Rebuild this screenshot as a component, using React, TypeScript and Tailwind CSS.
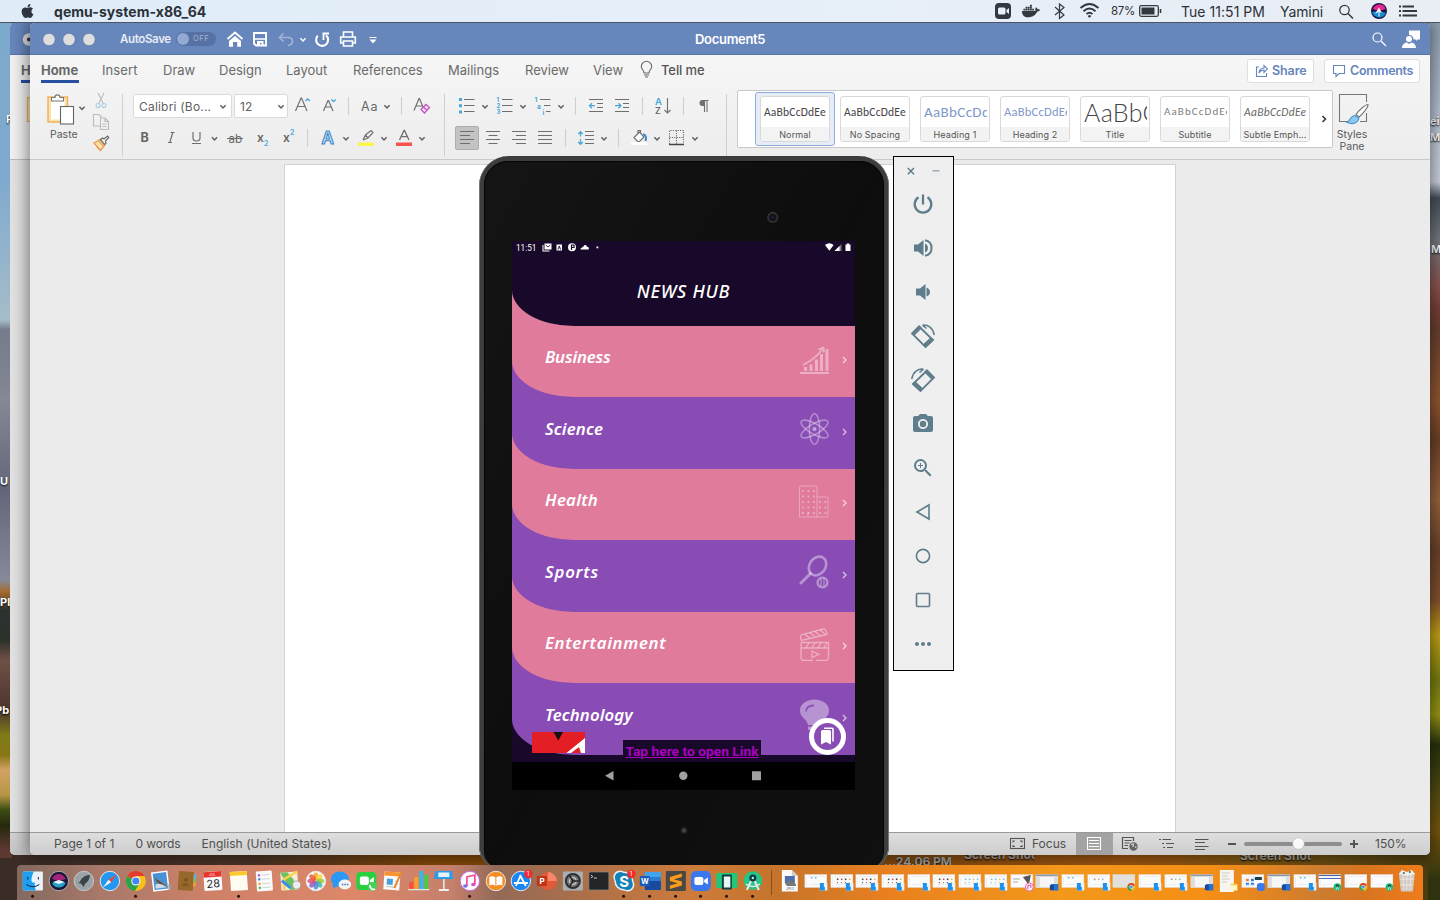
import React from "react";
import type { ReactNode } from "react";
import { FaApple, FaDocker } from "react-icons/fa";
import { MdCameraAlt, MdZoomIn, MdMoreHoriz } from "react-icons/md";

type BoxProps = { x: number; y: number; w: number; h: number; children?: ReactNode };

/* Icon cell: the viewBox starts at (x, y), so neighbouring cells share one coordinate space. */
function Ic({ x, y, w, h, children }: BoxProps) {
  return (
    <svg className="block shrink-0" width={w} height={h} viewBox={`${x} ${y} ${w} ${h}`} fill="none" stroke="#6f6f6f" strokeWidth="1.1">
      {children}
    </svg>
  );
}

const Chev = ({ x, y, c = "#5f5f5f" }: { x: number; y: number; c?: string }) => (
  <path d={`M${x - 2.6} ${y - 1.2}L${x} ${y + 1.5}L${x + 2.6} ${y - 1.2}`} stroke={c} strokeWidth="1.5" />
);

/* ---------- Menu bar ---------- */
function MenuBar() {
  return (
    <header className="flex h-[23px] items-center border-b border-[#4a5563] bg-linear-to-r from-[#dfecf8] via-[#e6eff9] to-[#e9edf4] text-[#2a3138]">
      <FaApple className="mb-px ml-[20px] h-[16px] w-[15px] text-[#2d3640]" />
      <span className="ml-[19px] w-[941px] text-[14px] font-bold tracking-[0.050px]">qemu-system-x86_64</span>
      <Ic x={995} y={0} w={24} h={22}>
        <rect x="995" y="3" width="16" height="16" rx="4" fill="#33393f" stroke="none" />
        <rect x="998" y="7.500" width="7.500" height="7" rx="1.500" fill="#e9f0f8" stroke="none" />
        <path d="M1006.500 10L1009 8V14L1006.500 12Z" fill="#e9f0f8" stroke="none" />
      </Ic>
      <FaDocker className="ml-[3px] h-[18px] w-[18px] text-[#33393f]" />
      <Ic x={1040} y={0} w={85} h={22}>
        <path d="M1055 7L1064 15L1059.500 18.500V4L1064 7.500L1055 15" stroke="#33393f" strokeWidth="1.200" />
        <path d="M1080.500 8Q1089.500 0 1098.500 8" stroke="#33393f" strokeWidth="2" />
        <path d="M1083.500 11.200Q1089.500 5.800 1095.500 11.200" stroke="#33393f" strokeWidth="2" />
        <path d="M1086.500 14Q1089.500 11.500 1092.500 14" stroke="#33393f" strokeWidth="2" />
        <circle cx="1089.500" cy="16.300" r="1.300" fill="#33393f" stroke="none" />
      </Ic>
      <span className="mt-[2px] -ml-[14px] w-[28px] text-[11.500px] tracking-[-0.300px]">87%</span>
      <Ic x={1139} y={0} w={42} h={22}>
        <rect x="1139.700" y="5.700" width="18.600" height="10.600" rx="1.500" stroke="#33393f" strokeWidth="1.300" />
        <rect x="1141.500" y="7.500" width="13" height="7" fill="#33393f" stroke="none" />
        <path d="M1160.500 9V13" stroke="#33393f" strokeWidth="1.600" />
      </Ic>
      <span className="w-[99px] text-[14px] tracking-[0.040px] whitespace-nowrap">Tue 11:51 PM</span>
      <span className="w-[58px] text-[14px] tracking-[-0.100px]">Yamini</span>
      <Ic x={1338} y={0} w={32} h={22}>
        <circle cx="1344.500" cy="10" r="4.700" stroke="#33393f" strokeWidth="1.300" />
        <path d="M1348 13.500L1353 18.500" stroke="#33393f" strokeWidth="1.500" />
      </Ic>
      <Ic x={1370} y={0} w={60} h={22}>
        <circle cx="1379" cy="11" r="8" fill="#1c1648" stroke="none" />
        <path d="M1373 9C1374 4 1384 2 1385.500 9L1379 11Z" fill="#ec268f" stroke="none" />
        <path d="M1372 12C1374 18 1382 20 1386 13L1379 11Z" fill="#188cd3" stroke="none" />
        <path d="M1379 7.500L1382 13L1379.500 12V16.500H1378.500V12L1375 14Z" fill="#e9f4ff" stroke="none" />
        <path d="M1402.500 6.500H1414M1402.500 11H1417M1402.500 15.500H1417" stroke="#33393f" strokeWidth="2" />
        <path d="M1399 6.500H1401M1399 11H1401M1399 15.500H1401" stroke="#33393f" strokeWidth="1.800" />
      </Ic>
    </header>
  );
}

/* ---------- Word window ---------- */
function TitleBar() {
  return (
    <div className="flex h-[32px] shrink-0 items-center border-b border-[#5575ab] bg-[#6786bb] text-white">
      <Ic x={30} y={23} w={90} h={32}>
        {[49, 69, 89].map((c) => (
          <circle key={c} cx={c} cy="39.500" r="6.200" fill="#dedede" stroke="#4f6c9f" strokeWidth="0.600" />
        ))}
      </Ic>
      <span className="mt-[3px] w-[56px] text-[11.500px] font-semibold tracking-[-0.350px] text-[#e6ecf6]">AutoSave</span>
      <div className="mt-px flex h-[14px] w-[40px] items-center rounded-full bg-[#5672a4]">
        <span className="ml-[1px] size-[12px] rounded-full bg-[#92a9d1]" />
        <span className="ml-[4px] text-[7.500px] tracking-[0.600px] text-[#a3b5d6]">OFF</span>
      </div>
      <Ic x={216} y={23} w={34} h={32}>
        <path d="M227.500 39L235 32.500L242.500 39" stroke="#fff" strokeWidth="1.900" />
        <path d="M229 41L235 36L241 41V46.800H237.200V42H233V46.800H229Z" fill="#fff" stroke="none" />
      </Ic>
      <Ic x={250} y={23} w={24} h={32}>
        <path d="M254 33H266V45.500H256L254 43.500Z" stroke="#fff" strokeWidth="1.900" />
        <path d="M254 39H266" stroke="#fff" strokeWidth="1.400" />
        <path d="M257 41H263.500V46H261.500V43H260V46H257Z" fill="#fff" stroke="none" />
      </Ic>
      <Ic x={274} y={23} w={34} h={32}>
        <path d="M283.500 33.500L279.500 37.500L283.500 41.500M279.500 37.500H288C294 37.500 294 45 288 45.500" stroke="#a1b3d5" strokeWidth="1.700" />
        <Chev x={303} y={39.500} c="#fff" />
      </Ic>
      <Ic x={308} y={23} w={28} h={32}>
        <path d="M326 35.300A6 6 0 1 1 317.700 35.800" stroke="#fff" strokeWidth="2.100" />
        <path d="M322.500 33.500H329M323.500 33.500V40" stroke="#fff" strokeWidth="1.800" />
      </Ic>
      <Ic x={336} y={23} w={28} h={32}>
        <path d="M343.500 37V32H352.500V37M343 43H340.700V37H355.300V43H353M343.500 41H352.500V46H343.500Z" stroke="#fff" strokeWidth="1.600" />
      </Ic>
      <Ic x={364} y={23} w={40} h={32}>
        <path d="M369.500 37.500H376.500" stroke="#fff" />
        <path d="M369.500 39.500H376.500L373 43.500Z" fill="#fff" stroke="none" />
      </Ic>
      <span className="mt-[3px] ml-[291px] w-[670px] text-[13px] font-semibold tracking-[-0.300px]">Document5</span>
      <Ic x={1365} y={23} w={30} h={32}>
        <circle cx="1377.500" cy="37.500" r="4.500" stroke="#fff" strokeWidth="1.200" />
        <path d="M1381 41L1386 46" stroke="#fff" strokeWidth="1.200" />
      </Ic>
      <Ic x={1395} y={23} w={35} h={32}>
        <path d="M1409 30.500H1420V39.500H1417.500L1416 41V39.500H1413.500A4.200 4.200 0 0 0 1409 35Z" fill="#fff" stroke="none" />
        <circle cx="1409" cy="39" r="3" fill="#fff" stroke="none" />
        <path d="M1402 48C1402 44.500 1405 42.500 1407 42.500L1409 44L1411.500 42.500C1414 43 1416 44.500 1416 48Z" fill="#fff" stroke="none" />
      </Ic>
    </div>
  );
}

function Tabs() {
  return (
    <div className="flex h-[32px] shrink-0 items-center pl-[11px] text-[13px] whitespace-nowrap text-[#6a6a6a]">
      <span className="w-[61px] shrink-0 font-bold">
        <span className="block h-[24px] w-[38px] border-b-[3px] border-[#274f9f] leading-[22px] tracking-[-0.050px]">Home</span>
      </span>
      <span className="w-[61px] shrink-0 tracking-[0.100px]">Insert</span>
      <span className="w-[56px] shrink-0">Draw</span>
      <span className="w-[67px] shrink-0">Design</span>
      <span className="w-[67px] shrink-0">Layout</span>
      <span className="w-[95px] shrink-0">References</span>
      <span className="w-[77px] shrink-0">Mailings</span>
      <span className="w-[68px] shrink-0">Review</span>
      <span className="w-[45px] shrink-0">View</span>
      <Ic x={638} y={55} w={23} h={32}>
        <path d="M644 73C644 70 641.300 69.500 641.300 66.500A5.200 5.200 0 0 1 651.700 66.500C651.700 69.500 649 70 649 73ZM644 75H649M645 77H648" stroke="#666" />
      </Ic>
      <span className="w-[586px] shrink-0 font-medium tracking-[-0.100px] text-[#555]">Tell me</span>
      <button className="flex h-[24px] w-[67px] shrink-0 items-center rounded-[3px] border border-[#dedede] bg-white font-semibold text-[#6585bd]">
        <Ic x={1248} y={60} w={24} h={22}>
          <path d="M1259 67H1256.500V76.500H1266.500V73M1259 73C1259 69.500 1262 68 1264 68V65.500L1267.500 69L1264 72.500V70C1262 70 1260 71 1259 73Z" stroke="#6585bd" />
        </Ic>
        <span className="text-[12.500px] tracking-[-0.100px]">Share</span>
      </button>
      <button className="ml-[10px] flex h-[24px] w-[96px] shrink-0 items-center rounded-[3px] border border-[#dedede] bg-white font-semibold text-[#6585bd]">
        <Ic x={1325} y={60} w={25} h={22}>
          <path d="M1333.500 65.500H1344.500V73.500H1339L1336 76.500V73.500H1333.500Z" stroke="#6585bd" />
        </Ic>
        <span className="text-[12.500px] tracking-[-0.300px]">Comments</span>
      </button>
    </div>
  );
}

const Sep = () => <div className="h-[62px] w-px shrink-0 self-center bg-[#cfcfcf]" />;

function PasteGroup() {
  return (
    <div className="flex w-[92px] shrink-0">
      <div className="w-[62px]">
        <Ic x={30} y={90} w={62} h={37}>
          <rect x="48" y="97" width="19.500" height="25" fill="#fbe3ae" stroke="#f1ae58" strokeWidth="1.400" />
          <rect x="51" y="99.500" width="13.500" height="20" fill="#fff" stroke="none" />
          <path d="M51.500 101V97.500H55C55 94 60 94 60 97.500H63.500V101Z" fill="#fff" stroke="#777" />
          <rect x="60.500" y="106.500" width="13" height="17.500" fill="#fff" stroke="#666" />
          <Chev x={82} y={108} />
        </Ic>
        <div className="pl-[20px] text-[10.500px] leading-[15px] text-[#5a5a5a]">Paste</div>
      </div>
      <Ic x={92} y={90} w={29} h={64}>
        <path d="M98 93L103.500 104M104 93L98.500 104" stroke="#bbb" />
        <circle cx="98" cy="105.500" r="2" stroke="#a8cfe6" />
        <circle cx="104" cy="105.500" r="2" stroke="#a8cfe6" />
        <path d="M100 126H93.500V114.500H99L102 117.500M100.500 118H105L108.500 121.500V129.500H100.500ZM105 118V121.500H108.500M102.500 124H106.500M102.500 126.500H106.500" stroke="#bcbcbc" />
        <path d="M94 143L100 139.500L104.500 145.500L100.500 150.500Z" fill="#fbe3ae" stroke="#e9994c" strokeWidth="1.300" />
        <path d="M97 147L100 150M98.500 141L103.500 146.500" stroke="#e9994c" />
        <path d="M100.500 139.500L102.500 138L104 139L107.500 136L108.800 137.500L105.500 141L106 143L104.800 144.500Z" fill="#f4f4f4" stroke="#666" />
      </Ic>
    </div>
  );
}

function FontGroup() {
  return (
    <div className="w-[321px] shrink-0 pl-[10px]">
      <div className="flex h-[32px] items-center">
        <div className="flex h-[24px] w-[99px] items-center rounded-[2px] border border-[#dadada] bg-white">
          <span className="mt-px w-[83px] pl-[5px] text-[12px] tracking-[0.200px] text-[#606060]">Calibri (Bo...</span>
          <Ic x={218} y={95} w={12} h={22}><Chev x={224} y={106.500} /></Ic>
        </div>
        <div className="ml-[2px] flex h-[24px] w-[54px] items-center rounded-[2px] border border-[#dadada] bg-white">
          <span className="mt-px w-[40px] pl-[5px] text-[12px] text-[#606060]">12</span>
          <Ic x={274} y={95} w={12} h={22}><Chev x={280} y={106.500} /></Ic>
        </div>
        <Ic x={288} y={90} w={30} h={32}>
          <path d="M295.500 111L301 98H301.500L307 111M297.500 106.500H305" strokeWidth="1.200" />
          <path d="M305.500 101L307.700 99L310 101" stroke="#4aa7dc" strokeWidth="1.400" />
        </Ic>
        <Ic x={318} y={90} w={24} h={32}>
          <path d="M323.500 111L328 100.500H328.500L333 111M325 107H331.500" strokeWidth="1.200" />
          <path d="M331.300 99.500L333.500 101.500L335.800 99.500" stroke="#4aa7dc" strokeWidth="1.400" />
        </Ic>
        <Ic x={342} y={90} w={68} h={32}>
          <path d="M348.500 97V115M401.500 97V115" stroke="#cfcfcf" />
          <text x="361" y="110.500" fontSize="12.500" letterSpacing="1" fill="#666" stroke="none">Aa</text>
          <Chev x={387} y={106.500} />
        </Ic>
        <Ic x={410} y={90} w={24} h={32}>
          <path d="M414 110.500L419 98.500H419.500L423 107M416 106H422" strokeWidth="1.200" />
          <path d="M421 109.500L426 104.500L429.500 107.500L424.500 113ZM423.500 107L427 110.500" fill="#f7e3f7" stroke="#c055c0" strokeWidth="1.300" />
        </Ic>
      </div>
      <div className="flex h-[32px] items-center">
        <Ic x={133} y={122} w={24} h={32}><text x="140.500" y="142" fontSize="12.500" fontWeight="700" fill="#666" stroke="none">B</text></Ic>
        <Ic x={157} y={122} w={26} h={32}><path d="M170.500 132.500H174.500M168 142.500H172M172.800 132.500L169.800 142.500" strokeWidth="1.200" /></Ic>
        <Ic x={183} y={122} w={40} h={32}>
          <path d="M193 132V138C193 142 200 142 200 138V132M192 143.500H201" strokeWidth="1.200" />
          <Chev x={214.500} y={138.500} />
        </Ic>
        <Ic x={223} y={122} w={26} h={32}><text x="228.500" y="142.500" fontSize="11.500" fill="#666" stroke="none">ab</text><path d="M227 138.500H243" /></Ic>
        <Ic x={249} y={122} w={26} h={32}>
          <text x="257" y="142" fontSize="12" fontWeight="600" fill="#666" stroke="none">x</text>
          <text x="264" y="146" fontSize="7" fontWeight="600" fill="#4aa7dc" stroke="none">2</text>
        </Ic>
        <Ic x={275} y={122} w={41} h={32}>
          <text x="283" y="142" fontSize="12" fontWeight="600" fill="#666" stroke="none">x</text>
          <text x="290" y="135" fontSize="7" fontWeight="600" fill="#4aa7dc" stroke="none">2</text>
          <path d="M307.500 129V147" stroke="#cfcfcf" />
        </Ic>
        <Ic x={316} y={122} w={38} h={32}>
          <text x="321.500" y="144" fontSize="17" fontWeight="600" fill="#d9edfb" stroke="#3b87c8" strokeWidth="1.100">A</text>
          <Chev x={346} y={138.500} />
        </Ic>
        <Ic x={354} y={122} w={38} h={32}>
          <path d="M363 140L365.500 135L371 130.500L373 132.500L368 138L363 140M365.500 135L368 138" strokeWidth="1.200" />
          <rect x="358" y="142.500" width="16" height="3.500" fill="#fdf44c" stroke="none" />
          <Chev x={384} y={138.500} />
        </Ic>
        <Ic x={392} y={122} w={38} h={32}>
          <path d="M399.500 140L404 130.500H404.500L409 140M401.500 136.700H407" strokeWidth="1.300" />
          <rect x="396" y="142.500" width="16" height="3.500" fill="#fb5252" stroke="none" />
          <Chev x={422} y={138.500} />
        </Ic>
      </div>
    </div>
  );
}

function ParagraphGroup() {
  return (
    <div className="w-[281px] shrink-0">
      <div className="flex h-[32px] items-center">
        <Ic x={445} y={90} w={48} h={32}>
          <path d="M464 99.500H474.500M464 105.500H474.500M464 111.500H474.500" />
          <path d="M460.500 98V101M460.500 104.200V107.200M460.500 110.500V113.500" stroke="#4aa7dc" strokeWidth="3" />
          <Chev x={485} y={106.500} />
        </Ic>
        <Ic x={493} y={90} w={38} h={32}>
          <path d="M502 99.500H512.500M502 105.500H512.500M502 111.500H512.500" />
          <g fill="#4aa7dc" stroke="none" fontSize="6" fontWeight="700">
            <text x="496.500" y="102">1</text><text x="496.500" y="108">2</text><text x="496.500" y="114">3</text>
          </g>
          <Chev x={523} y={106.500} />
        </Ic>
        <Ic x={531} y={90} w={50} h={32}>
          <path d="M540 99.500H550.500M544 105.500H550.500M546 111.500H550.500" />
          <g fill="#4aa7dc" stroke="none" fontSize="6.500" fontWeight="700">
            <text x="534.500" y="102">1</text><text x="537" y="108.500">a</text><text x="542.500" y="114.500">i</text>
          </g>
          <Chev x={561} y={106.500} />
          <path d="M575.500 97V115" stroke="#cfcfcf" />
        </Ic>
        <Ic x={581} y={90} w={26} h={32}>
          <path d="M589 99.500H603M597 103.500H603M597 107.500H603M589 111.500H603" />
          <path d="M595 105.700H590M592 103.200L589.500 105.700L592 108.200" stroke="#4aa7dc" strokeWidth="1.300" />
        </Ic>
        <Ic x={607} y={90} w={42} h={32}>
          <path d="M615 99.500H629M623 103.500H629M623 107.500H629M615 111.500H629" />
          <path d="M615 105.700H620.500M618.500 103.200L621 105.700L618.500 108.200" stroke="#4aa7dc" strokeWidth="1.300" />
          <path d="M642.500 97V115" stroke="#cfcfcf" />
        </Ic>
        <Ic x={649} y={90} w={40} h={32}>
          <text x="655" y="105" fontSize="9.500" fontWeight="600" fill="#4aa7dc" stroke="none">A</text>
          <text x="655" y="114" fontSize="9" fontWeight="500" fill="#666" stroke="none">Z</text>
          <path d="M667.500 98V113M664.500 110L667.500 113L670.500 110" />
          <path d="M683.500 97V115" stroke="#cfcfcf" />
        </Ic>
        <Ic x={689} y={90} w={30} h={32}>
          <path d="M704.500 112V100.500H708.500M707 100.500V112" strokeWidth="1.100" />
          <path d="M704.500 100H702.500A3 3 0 0 0 702.500 106H704.500Z" fill="#6f6f6f" stroke="none" />
        </Ic>
      </div>
      <div className="flex h-[32px] items-center pl-[10px]">
        <div className="h-[24px] w-[24px] rounded-[2px] border border-[#adadad] bg-[#c3c3c3]">
          <Ic x={456} y={127} w={22} h={22}><path d="M460 131.500H474M460 135.500H470M460 139.500H474M460 143.500H470" /></Ic>
        </div>
        <Ic x={479} y={122} w={27} h={32}><path d="M486 131.500H500M488.500 135.500H497.500M486 139.500H500M488.500 143.500H497.500" /></Ic>
        <Ic x={506} y={122} w={26} h={32}><path d="M512 131.500H526M516 135.500H526M512 139.500H526M516 143.500H526" /></Ic>
        <Ic x={532} y={122} w={40} h={32}><path d="M538 131.500H552M538 135.500H552M538 139.500H552M538 143.500H552" /><path d="M565.500 129V147" stroke="#cfcfcf" /></Ic>
        <Ic x={572} y={122} w={54} h={32}>
          <path d="M585 131.500H594M585 135.500H594M585 139.500H594M585 143.500H594" />
          <path d="M580.500 132V136.500M578.200 134L580.500 131.700L582.800 134M580.500 139V144M578.200 142L580.500 144.300L582.800 142" stroke="#4aa7dc" strokeWidth="1.300" />
          <Chev x={604} y={138.500} />
          <path d="M618.500 129V147" stroke="#cfcfcf" />
        </Ic>
        <Ic x={626} y={122} w={38} h={32}>
          <path d="M634 137.500L639.500 132L644 137L638.500 142.500ZM638 133.500V130.500H640.500V133" fill="#fff" strokeWidth="1.200" />
          <path d="M643 134.500C646 134 646.500 138 645.500 141" stroke="#3b87c8" strokeWidth="2" />
          <path d="M631 143.500H647" stroke="#fff" strokeWidth="3" />
          <Chev x={657} y={138.500} />
        </Ic>
        <Ic x={664} y={122} w={40} h={32}>
          <path d="M669.500 144V130.500H683.500V144M676.500 130.500V144M669.500 137.500H683.500" strokeDasharray="1.200 1.200" />
          <path d="M669 144.500H684" stroke="#444" strokeWidth="1.400" />
          <Chev x={695} y={138.500} />
        </Ic>
      </div>
    </div>
  );
}

const styleCards = [
  { n: "Normal", c: "text-[11.500px] text-[#444] tracking-[0.220px]", sel: true },
  { n: "No Spacing", c: "text-[11.500px] text-[#444] tracking-[0.220px]" },
  { n: "Heading 1", c: "text-[15px] text-[#7f99c9] tracking-[0.350px]" },
  { n: "Heading 2", c: "text-[12.500px] text-[#7f99c9] tracking-[0.250px]" },
  { n: "Title", c: "[font-family:Lato,sans-serif]! text-[25px] text-[#444] font-light tracking-[0.300px]" },
  { n: "Subtitle", c: "text-[11px] text-[#808080] tracking-[1.100px]" },
  { n: "Subtle Emph...", c: "text-[11.500px] text-[#666] italic tracking-[0.300px]" },
];

function StylesGroup() {
  return (
    <div className="flex min-w-0 flex-1 pl-[10px]">
      <div className="flex h-[58px] w-[596px] shrink-0 items-center rounded-[2px] border border-[#c9c9c9] bg-white pl-[17px]">
        {styleCards.map((s) => (
          <div key={s.n} className={s.sel ? "flex h-[54px] w-[80px] items-center justify-center rounded-[3px] border border-[#8fabd9] bg-[#e7edf7]" : "flex h-[54px] w-[80px] items-center justify-center"}>
            <div className="flex h-[46px] w-[70px] flex-col overflow-hidden rounded-[3px] border border-[#d9d9d9] bg-white">
              <div className="mr-[2px] ml-[2px] flex h-[31px] items-center overflow-hidden pt-px pl-px">
                <span className={"[font-family:Carlito,Lato,sans-serif] whitespace-nowrap " + s.c}>AaBbCcDdEe</span>
              </div>
              <div className="h-[14px] bg-[#f3f3f3] text-center text-[9px] leading-[15px] tracking-[0.120px] whitespace-nowrap text-[#555]">{s.n}</div>
            </div>
          </div>
        ))}
        <Ic x={1315} y={105} w={17} h={28}><path d="M1322.500 116L1325.500 119L1322.500 122" stroke="#333" strokeWidth="1.500" /></Ic>
      </div>
      <div className="w-[38px]">
        <Ic x={1333} y={90} w={38} h={38}>
          <path d="M1349 121.500H1339.500V94.500H1366.500V102M1366.500 113V121.500H1360" stroke="#777" />
          <path d="M1368 104.500C1366 104 1358 111 1356 114.500L1359 117C1362 115 1368.500 107 1368 104.500Z" fill="#fff" stroke="#777" />
          <path d="M1347 122.500C1350 121 1350 116 1355 115.500L1359 118C1358 123 1353 125 1347 122.500Z" fill="#8ec8f0" stroke="#4a94cc" />
        </Ic>
        <div className="pt-px text-center text-[10.500px] leading-[12px] text-[#5a5a5a]">Styles Pane</div>
      </div>
    </div>
  );
}

function StatusBar() {
  return (
    <footer className="flex h-[23px] shrink-0 items-center border-t border-[#9a9a9a] bg-linear-to-b from-[#dedede] to-[#cdcdcd] pl-[24px] text-[12px] whitespace-nowrap text-[#4f4f4f]">
      <span className="w-[81.500px]">Page 1 of 1</span>
      <span className="w-[66px] tracking-[-0.100px]">0 words</span>
      <span className="w-[798.500px] tracking-[0.050px]">English (United States)</span>
      <Ic x={1000} y={833} w={32} h={22}>
        <rect x="1010.500" y="838.500" width="14" height="10" stroke="#555" />
        <path d="M1013 842.500V841H1015M1020 841H1022V842.500M1022 845V846.500H1020M1015 846.500H1013V845" stroke="#555" />
      </Ic>
      <span className="w-[44px]">Focus</span>
      <div className="bg-[#a3a3a3]">
        <Ic x={1076} y={833} w={37} h={22}>
          <path d="M1087.500 837.500H1100.500V849.500H1087.500ZM1089 840.500H1099M1089 843.500H1099M1089 846.500H1099" stroke="#fff" />
        </Ic>
      </div>
      <Ic x={1113} y={833} w={36} h={22}>
        <path d="M1128 848.500H1122.500V837.500H1133.500V841M1124.500 840.500H1131.500M1124.500 843H1129.500M1124.500 845.500H1128" stroke="#555" strokeWidth="1.200" />
        <circle cx="1133.500" cy="846.500" r="4.200" fill="#666" stroke="none" />
        <path d="M1131 844.500L1133.500 844L1133 847M1135 847.500L1136.500 846.500" stroke="#ddd" />
      </Ic>
      <Ic x={1149} y={833} w={40} h={22}>
        <path d="M1159 839.500H1161M1162.500 839.500H1171M1162 843.500H1164M1166 843.500H1174M1163 847.500H1165M1167 847.500H1173" stroke="#555" />
      </Ic>
      <Ic x={1189} y={833} w={30} h={22}><path d="M1195 839.500H1208.500M1195 842.500H1205M1195 846.500H1208.500M1195 849.500H1205" stroke="#555" /></Ic>
      <Ic x={1219} y={833} w={156} h={22}>
        <path d="M1228 844H1236M1350 844H1358M1354 840V848" stroke="#555" strokeWidth="2" />
        <path d="M1246 844H1340" stroke="#8e8e8e" strokeWidth="4" strokeLinecap="round" />
        <circle cx="1298.500" cy="843.500" r="5.800" fill="#fafafa" stroke="#b8b8b8" strokeWidth="0.600" />
      </Ic>
      <span>150%</span>
    </footer>
  );
}

function WordWindow() {
  return (
    <section className="absolute top-[23px] left-[30px] flex h-[832px] w-[1400px] flex-col overflow-hidden rounded-[5px] bg-[#ebebeb] shadow-[0_0_16px_3px_rgba(0,0,0,0.45)]">
      <TitleBar />
      <div className="flex h-[105px] shrink-0 flex-col border-b border-[#cacaca] bg-linear-to-b from-[#f6f6f6] to-[#ededed]">
        <Tabs />
        <div className="flex flex-1 pt-[3px]">
          <PasteGroup />
          <Sep />
          <FontGroup />
          <Sep />
          <ParagraphGroup />
          <Sep />
          <StylesGroup />
        </div>
      </div>
      <div className="flex min-h-0 flex-1 pt-[4px] pl-[254px]">
        <div className="w-[892px] border border-b-0 border-[#d2d2d2] bg-white" />
      </div>
      <StatusBar />
    </section>
  );
}

function BackWindow() {
  return (
    <section className="absolute top-[23px] left-[10px] flex h-[832px] w-[1400px] flex-col overflow-hidden rounded-[5px] bg-[#e2e2e2]">
      <div className="h-[32px] shrink-0 border-b border-[#5575ab] bg-[#6786bb]">
        <Ic x={10} y={23} w={30} h={32}>
          <circle cx="29" cy="39.500" r="6.200" fill="#dedede" stroke="none" />
          <circle cx="29" cy="39.500" r="2" fill="#333" stroke="none" />
        </Ic>
      </div>
      <div className="h-[105px] shrink-0 border-b border-[#bbb] bg-[#f0f0f0] pt-[4px] pl-[11px] text-[13px] font-bold text-[#6a6a6a]">
        <span className="block h-[24px] w-[38px] border-b-[3px] border-[#274f9f] leading-[22px]">H</span>
        <div className="mt-[14px] ml-[6px] h-[25px] w-[20px] border-[1.500px] border-[#f1ae58] bg-[#fbe3ae]" />
      </div>
      <div className="flex-1" />
      <div className="h-[23px] border-t border-[#9a9a9a] bg-linear-to-b from-[#d2d2d2] to-[#c4c4c4]" />
    </section>
  );
}

/* ---------- Phone ---------- */
const icon = { stroke: "#fff", fill: "none", strokeOpacity: 0.4 };
const categories: { name: string; bg: string; next: string; track: string; art: ReactNode }[] = [
  {
    name: "Business", bg: "bg-[#e07b9c]", next: "bg-[#894cb4]", track: "tracking-[-0.180px]",
    art: (
      <g {...icon} transform="translate(0 1)">
        <path d="M1 29.500H30" strokeWidth="2" />
        <path d="M6.500 27.500V23.500M12 27.500V21M17.500 27.500V16M22.500 27.500V10.500M28 27.500V5.500" strokeWidth="3" />
        <path d="M4 21.500C13 17 19 12 24 5M19 6L24.500 4L25 9" strokeWidth="1.800" />
      </g>
    ),
  },
  {
    name: "Science", bg: "bg-[#894cb4]", next: "bg-[#e07b9c]", track: "tracking-[0.100px]",
    art: (
      <g {...icon} strokeOpacity="0.350" strokeWidth="1.600">
        <ellipse cx="15.500" cy="15.500" rx="5.200" ry="15.300" />
        <ellipse cx="15.500" cy="15.500" rx="5.200" ry="15.300" transform="rotate(60 15.500 15.500)" />
        <ellipse cx="15.500" cy="15.500" rx="5.200" ry="15.300" transform="rotate(120 15.500 15.500)" />
        <circle cx="15.500" cy="15.500" r="1.500" fill="#fff" fillOpacity="0.350" />
      </g>
    ),
  },
  {
    name: "Health", bg: "bg-[#e07b9c]", next: "bg-[#894cb4]", track: "tracking-[0.250px]",
    art: (
      <g {...icon} strokeWidth="0.900" strokeOpacity="0.350">
        <path d="M0.500 31.500V2Q0.500 0.500 2 0.500H16.500Q18 0.500 18 2V31.500ZM18 11.500H27.500Q29 11.500 29 13V31.500H18M9 31V27" />
        <path d="M3 5.500H16M3 11H16M3 16.500H16M3 22H16M3 27.500H16M20 16.500H28M20 22H28M20 27.500H28" strokeWidth="2" strokeDasharray="1.800 3.700" />
      </g>
    ),
  },
  {
    name: "Sports", bg: "bg-[#894cb4]", next: "bg-[#e07b9c]", track: "tracking-[0.750px]",
    art: (
      <g {...icon}>
        <ellipse cx="18.500" cy="9.500" rx="8" ry="10" transform="rotate(35 18.500 9.500)" strokeWidth="2.600" />
        <path d="M2 26.500L11.500 17" strokeWidth="3" strokeLinecap="round" />
        <circle cx="23.500" cy="26" r="4.900" strokeWidth="2.400" />
        <path d="M22 22V30M25 22V30" strokeWidth="1.200" />
      </g>
    ),
  },
  {
    name: "Entertainment", bg: "bg-[#e07b9c]", next: "bg-[#894cb4]", track: "tracking-[0.680px]",
    art: (
      <g {...icon} strokeWidth="1.300">
        <path d="M2 14H29.500V29Q29.500 32 26 32H17M14 32H5Q2 32 2 29V14M2 19.500H29.500" />
        <path d="M2.500 12Q0 7 3 6L24 0.500Q27 0 28 6Z" />
        <path d="M6 6L11 9.500M11 4.500L16 8M16 3L21 7M21 1.500L26 5.500M10 14.500L7 19M16 14.500L13 19M22 14.500L19 19M28 14.500L25 19M13 22.500V29L20 25.800Z" />
      </g>
    ),
  },
  {
    name: "Technology", bg: "bg-[#894cb4]", next: "bg-[#180829]", track: "tracking-[0.100px]",
    art: (
      <g fill="#fff" fillOpacity="0.400">
        <path d="M15.500 0C24 0 30 5 30 11C30 18 23 19.500 22 25.500H9C8 19.500 1 18 1 11C1 5 7 0 15.500 0Z" />
        <path d="M9 27H22V30.500H9Z" />
        <path d="M7 12C7 8 10 6 15 6" fill="none" stroke="#894cb4" strokeWidth="1.800" />
      </g>
    ),
  },
];

function PhoneScreen() {
  return (
    <div className="relative flex h-[549px] w-[343px] flex-col overflow-hidden bg-[#180829] [font-family:'Noto_Sans',sans-serif] text-white">
      <div className="h-[84.500px] shrink-0 bg-[#e07b9c]">
        <div className="h-full bg-[#180829] [border-bottom-left-radius:62px_36px]">
          <div className="flex h-[13px] items-center [font-family:Roboto,sans-serif] text-[8.200px]">
            <span className="mt-px ml-[4px] w-[26px]">11:51</span>
            <Ic x={542} y={241} w={270} h={13}>
              <g fill="#fff" stroke="none">
                <path d="M542.500 245H543.500V250.500H549.500V251.500H542.500ZM544.500 243.500H551.500V249.500H544.500Z" />
                <path d="M556.500 244.500H562V250.500H556.500Z" />
                <circle cx="572" cy="247.300" r="4" />
                <path d="M580.500 249.500C580.500 247.500 583 247.500 583.500 246.200C584.500 244.300 586.500 244.500 587 246.800C588.800 246.800 589.500 248.500 588.500 249.500Z" />
                <rect x="596.500" y="246.500" width="1.800" height="1.800" />
              </g>
              <path d="M545.700 245L548 247L550.300 245" stroke="#180829" strokeWidth="0.800" />
              <path d="M558 249.500L559.300 246L560.500 249.500" stroke="#180829" strokeWidth="0.900" />
              <path d="M571.500 250V245H574V247.500H572" stroke="#180829" strokeWidth="1.200" />
            </Ic>
            <Ic x={812} y={241} w={43} h={13}>
              <path d="M825 245Q829.300 241.500 833.600 245L829.300 250.800Z" fill="#fff" stroke="none" />
              <path d="M834.500 251L841.500 244V251Z" fill="#fff" fillOpacity="0.450" stroke="none" />
              <path d="M834.500 251L839.500 246V251Z" fill="#fff" stroke="none" />
              <path d="M845.500 244.500H846.800V243.500H849.200V244.500H850.500V251H845.500Z" fill="#fff" stroke="none" />
            </Ic>
          </div>
          <h1 className="pt-[24px] text-center text-[18px] leading-[26px] font-medium tracking-[0.750px] italic">NEWS HUB</h1>
        </div>
      </div>
      {categories.map((c) => (
        <div key={c.name} className={"h-[71.500px] shrink-0 " + c.next}>
          <div className={"flex h-full pl-[33px] [border-bottom-left-radius:62px_36px] " + c.bg}>
            <span className={"w-[254px] pt-[18.500px] text-[16.800px] leading-[25px] font-semibold italic " + c.track}>{c.name}</span>
            <svg className="mt-[15px] block h-[34px] w-[32px]" viewBox="0 -1.500 32 34">{c.art}</svg>
            <svg className="mt-[28.500px] ml-[8px] block h-[12px] w-[12px]" viewBox="0 0 12 12" fill="none" stroke="#fff" strokeOpacity="0.700" strokeWidth="1.200"><path d="M4 3L7 6L4 9" /></svg>
          </div>
        </div>
      ))}
      <div className="absolute top-[491px] left-[20px]">
        <Ic x={0} y={0} w={53} h={21}>
          <rect width="53" height="21" fill="#e31f25" stroke="none" />
          <path d="M21.500 0H31L26.300 8.500Z" fill="#111" stroke="none" />
          <path d="M34.500 21L53 6V21H49L47 15L39 21Z" fill="#fff" stroke="none" />
        </Ic>
      </div>
      <div className="absolute top-[499px] left-[111px] h-[20px] w-[138px] bg-[#180829] text-center [font-family:Roboto,sans-serif] text-[13.700px] leading-[23px] font-bold tracking-[0.050px] whitespace-nowrap text-[#ab00c0] underline">Tap here to open Link</div>
      <div className="absolute top-[476.500px] left-[296.500px] flex size-[37px] items-center justify-center rounded-full border-[5px] border-white bg-[#894cb4]">
        <Ic x={0} y={0} w={18} h={20}>
          <path d="M3 5.500Q3 4 4.500 4H11.500Q13 4 13 5.500V18.500L8 16L3 18.500Z" fill="#fff" stroke="none" />
          <path d="M6 2.200H14Q15 2.200 15 3.200V15.500" stroke="#fff" strokeWidth="1.600" />
        </Ic>
      </div>
      <div className="absolute bottom-0 left-0 flex h-[28px] w-full bg-black">
        <Ic x={512} y={762} w={343} h={28}>
          <path d="M605 775.800L613.500 771V780.500Z" fill="#a0a0a0" stroke="none" />
          <circle cx="683.300" cy="775.700" r="4.200" fill="#a0a0a0" stroke="none" />
          <rect x="752" y="771.300" width="9" height="9" rx="0.500" fill="#a0a0a0" stroke="none" />
        </Ic>
      </div>
    </div>
  );
}

function Phone() {
  return (
    <section className="absolute top-[156px] left-[479px] h-[714px] w-[410px] rounded-t-[30px] rounded-b-[24px] bg-linear-to-b from-[#3a3a3a] to-[#303030] p-[1px] shadow-[inset_1px_0_0_#777,inset_-1px_0_0_#777]">
      <div className="h-full rounded-t-[28px] rounded-b-[23px] border-x-4 border-t-4 border-[#3d3d3d] bg-[#101010]">
        <div className="flex h-full flex-col rounded-t-[24px] rounded-b-[18px] border border-[#050505] bg-linear-to-br from-[#151515] via-[#0e0d0d] to-[#101010] pl-[27px]">
          <Ic x={512} y={162} w={343} h={79}>
            <circle cx="772.700" cy="217.300" r="4.700" fill="#151519" stroke="#353535" strokeWidth="1.600" />
            <circle cx="772.700" cy="217.500" r="1.300" fill="#1d1f4c" stroke="none" />
          </Ic>
          <PhoneScreen />
          <Ic x={512} y={790} w={343} h={72}>
            <circle cx="684" cy="830.500" r="3.200" fill="#292929" stroke="none" />
            <circle cx="684" cy="830.500" r="1.600" fill="#4a4a4a" stroke="none" />
          </Ic>
        </div>
      </div>
    </section>
  );
}

function Rotate({ flip }: { flip?: boolean }) {
  return (
    <svg className={flip ? "block size-[26px] -scale-x-100" : "block size-[26px]"} viewBox="0 0 26 26">
      <path d="M9 3.500L23 17L15.500 24L2 10.500Z" fill="none" stroke="#5f7d8b" strokeWidth="1.800" />
      <path d="M9 2.800L11.500 5L4 12.500L1.500 10.500ZM21 14.500L23.500 17L15.500 24.500L13 22Z" fill="#5f7d8b" stroke="#5f7d8b" strokeLinejoin="round" />
      <path d="M12.500 2.200C18 1.500 23 5 24.300 12M12.500 2.200L16.500 5.500" fill="none" stroke="#5f7d8b" strokeWidth="1.500" />
    </svg>
  );
}

function EmulatorBar() {
  const items: ReactNode[] = [
    <Ic x={0} y={0} w={24} h={24}><path d="M12 2.500V12.500M7.500 5.300A8.300 8.300 0 1 0 16.500 5.300" stroke="#5f7d8b" strokeWidth="2.300" /></Ic>,
    <Ic x={0} y={0} w={24} h={24}>
      <path d="M3 8.500H7L12.500 4V20L7 15.500H3ZM14 7.500Q17 9 17 12Q17 15 14 16.500Z" fill="#5f7d8b" stroke="none" />
      <path d="M14 4.300C18.500 5 20.500 8.500 20.500 12C20.500 15.500 18.500 19 14 19.700" stroke="#5f7d8b" strokeWidth="2" />
    </Ic>,
    <Ic x={0} y={0} w={24} h={24}><path d="M5 8.500H9L14.500 4V20L9 15.500H5ZM15.500 7.500Q19 9 19 12Q19 15 15.500 16.500Z" fill="#5f7d8b" stroke="none" /></Ic>,
    <Rotate />,
    <Rotate flip />,
    <MdCameraAlt className="size-[24px]" />,
    <MdZoomIn className="size-[24px]" />,
    <Ic x={0} y={0} w={24} h={24}><path d="M18 5V19L6 12Z" stroke="#5f7d8b" strokeWidth="1.600" /></Ic>,
    <Ic x={0} y={0} w={24} h={24}><circle cx="12" cy="12" r="6.600" stroke="#5f7d8b" strokeWidth="1.600" /></Ic>,
    <Ic x={0} y={0} w={24} h={24}><rect x="5.500" y="5.500" width="13" height="13" rx="1" stroke="#5f7d8b" strokeWidth="1.600" /></Ic>,
    <MdMoreHoriz className="size-[24px]" />,
  ];
  return (
    <aside className="absolute top-[156px] left-[893px] flex h-[515px] w-[61px] flex-col items-center border border-black bg-[#efefef] text-[#5f7d8b]">
      <Ic x={894} y={157} w={59} h={25}>
        <path d="M907.800 168L914 174.200M914 168L907.800 174.200" stroke="#5f7d8b" strokeWidth="1.500" />
        <path d="M932.500 170.800H939.500" stroke="#9fb2bb" strokeWidth="1.600" />
      </Ic>
      {items.map((it, i) => (
        <div key={i} className="flex h-[44px] items-center justify-center pr-[1px]">{it}</div>
      ))}
    </aside>
  );
}

/* ---------- Dock ---------- */
const disc = (fill: string, rim = "#e8e8e8") => <circle r="9.700" fill={fill} stroke={rim} strokeWidth="1" />;
const badge = <g><circle cx="7.500" cy="-7" r="4.200" fill="#f5282c" /><text x="6" y="-4.600" fontSize="6" fill="#fff">1</text></g>;

const apps: { art: ReactNode; on?: boolean }[] = [
  { on: true, art: <g><rect x="-10" y="-9.500" width="20" height="19" rx="1" fill="#eaf3fb" /><path d="M-10 -9.500H1C-2 -3 -2 1 0 1.500H2C1.500 4 2 7 3 9.500H-10Z" fill="#1da0f2" /><path d="M-5 -4V-1.500M5.500 -4V-1.500M-6.500 3.500Q0 8 6.500 3.500" stroke="#123" fill="none" /></g> },
  { art: <g>{disc("#1b1735", "#aaa")}<path d="M-7 -2C-4 -9 4 -8 7 -2L0 0Z" fill="#a3247a" /><path d="M-7 2C-4 8 4 8 7 2L0 0Z" fill="#25a0c8" /><path d="M-6 1L0 -1L6 1L0 3Z" fill="#e8f6ff" /></g> },
  { art: <g>{disc("#9aa3a7", "#c5c5c5")}<path d="M6 -6C0 -6 -3 -2 -4 1L-6 2L-3 2.500L-1 5L0 6L1 3C4 1 6 -2 6 -6Z" fill="#3c4347" /></g> },
  { art: <g>{disc("#2697ee")}<path d="M7 -6.500L1.300 1.300L-1.300 -1.300Z" fill="#f0463c" /><path d="M-7 6.500L1.300 1.300L-1.300 -1.300Z" fill="#f5f5f5" /></g> },
  { on: true, art: <g><circle r="10" fill="#fbc116" /><path d="M0 0L-8.700 -5A10 10 0 0 1 8.700 -5H0Z" fill="#e33b2e" /><path d="M0 0L-8.700 -5A10 10 0 0 0 -1 10L4 2Z" fill="#2ba24c" /><circle r="4.600" fill="#fff" /><circle r="3.600" fill="#4285f4" /></g> },
  { art: <g transform="rotate(-7)"><rect x="-8" y="-9" width="15" height="18" fill="#4791d6" stroke="#fff" strokeWidth="1.500" /><path d="M-6 -4L0 1L5 6L0 5L-4 0Z" fill="#714c24" /><path d="M-6 3Q0 1 5 7H-6Z" fill="#cfdde8" /><circle cx="8" cy="7" r="3" fill="#999" fillOpacity="0.600" /></g> },
  { art: <g transform="rotate(4)"><rect x="-8.500" y="-9.500" width="15" height="19" rx="1" fill="#97682b" /><path d="M6.500 -7H9V-3H6.500Z" fill="#59b6e0" /><path d="M6.500 -3H9V1H6.500Z" fill="#7cc35c" /><path d="M6.500 1H9V5H6.500Z" fill="#f0a13a" /><circle cx="-1" cy="-1" r="2" fill="#7b571f" /><path d="M-5 5Q-1 -1 3 5Z" fill="#7b571f" /></g> },
  { art: <g transform="rotate(-4)"><rect x="-9" y="-9.500" width="18" height="19" rx="1" fill="#fafafa" /><path d="M-9 -9.500H9V-4H-9Z" fill="#e9352f" /><text x="-6.500" y="6.500" fontSize="11" fill="#222">28</text><text x="-3.500" y="-5.300" fontSize="3.500" fill="#fff">JUL</text></g> },
  { on: true, art: <g transform="rotate(-4)"><rect x="-8.500" y="-9.500" width="17" height="19" fill="#fffdf2" /><path d="M-8.500 -9.500H8.500V-5.500H-8.500Z" fill="#fcca2d" /></g> },
  { art: <g transform="rotate(-4)"><rect x="-7.500" y="-10" width="16" height="20" rx="1" fill="#fafafa" /><path d="M-2 -6H6M-2 -2H6M-2 2.500H6M-2 6.500H6" stroke="#ccc" strokeWidth="0.800" /><circle cx="-4.500" cy="-6" r="1.300" fill="#c35fd3" /><circle cx="-4.500" cy="-2" r="1.300" fill="#3f95f0" /><circle cx="-4.500" cy="2.500" r="1.300" fill="#f7a32c" /><circle cx="-4.500" cy="6.500" r="1.300" fill="#4bc24f" /></g> },
  { art: <g transform="rotate(-4)"><rect x="-9" y="-9" width="17" height="18" fill="#f2eddc" /><path d="M-9 -9H-2L4 -1V9H0Z" fill="#6cc261" /><path d="M-6 9V-2L8 -9" stroke="#ffd24d" strokeWidth="2.500" fill="none" /><path d="M-8 -1L0 7" stroke="#3c8bea" strokeWidth="3" /><circle cx="6.500" cy="4.500" r="4" fill="#eee" stroke="#999" strokeWidth="0.800" /></g> },
  { art: <g>{disc("#fafafa")}{["#f5a623", "#f8d63a", "#9bc93c", "#47b7a0", "#4a90d9", "#8e62c7", "#d9507f", "#ec5b37"].map((c, i) => <ellipse key={c} cx="0" cy="-4.500" rx="2.500" ry="4" fill={c} fillOpacity="0.850" transform={`rotate(${i * 45})`} />)}</g> },
  { art: <g><ellipse cx="-1" cy="-2" rx="9" ry="7.500" fill="#2999f5" /><path d="M-8 2L-8 7L-2 5Z" fill="#2999f5" /><ellipse cx="4" cy="3.500" rx="6.300" ry="5" fill="#f4f4f4" /><path d="M1 3.500H2.500M3.500 3.500H5M6 3.500H7.500" stroke="#3877b5" strokeWidth="1.400" /></g> },
  { art: <g><rect x="-10.500" y="-9" width="20" height="18" rx="4" fill="#28d03e" /><rect x="-7" y="-4.500" width="9" height="8.500" rx="2" fill="#fff" /><path d="M3 -1L7 -4V3L3 1Z" fill="#fff" /><circle cx="5.500" cy="5.500" r="4.500" fill="#45d255" /><path d="M3 4C3 8 6 9 8 8" stroke="#fff" strokeWidth="1.800" fill="none" /></g> },
  { art: <g transform="rotate(4)"><rect x="-9" y="-9" width="16" height="18" fill="#fafafa" /><path d="M-9 -9H7V-5H-9Z" fill="#f79331" /><path d="M-6 -2H0V4H-6Z" fill="#4b9ee4" /><path d="M-6 6H4M2 0H5M2 3H5" stroke="#bbb" /><path d="M8 -10L2 7" stroke="#e98a2b" strokeWidth="2" /></g> },
  { art: <g><path d="M-10.500 8.500H10.500" stroke="#e4e4e4" strokeWidth="1.500" /><path d="M-7.500 8V1" stroke="#fa4f3f" strokeWidth="4" /><path d="M-2.500 8V-4" stroke="#fd9d2a" strokeWidth="4" /><path d="M2.500 8V-10" stroke="#31b9e8" strokeWidth="4" /><path d="M7.500 8V-6" stroke="#47c94c" strokeWidth="4" /></g> },
  { art: <g><path d="M-8.500 -10H8L9.500 -2H-10Z" fill="#2a9cec" /><rect x="-5.500" y="-8.500" width="11" height="4.500" fill="#e9f3fb" /><path d="M0 -2V8" stroke="#ddd" strokeWidth="1.800" /><path d="M-5 9H5" stroke="#eee" strokeWidth="2" /></g> },
  { on: true, art: <g>{disc("#fbfbfb", "#c26be8")}<path d="M-3 5V-4L5 -6V3" stroke="#ef4c9a" strokeWidth="1.700" fill="none" /><ellipse cx="-4.500" cy="5" rx="2.300" ry="1.700" fill="#7a6df0" /><ellipse cx="3.500" cy="3.500" rx="2.300" ry="1.700" fill="#d94ccc" /></g> },
  { art: <g>{disc("#f68d22")}<path d="M-6.500 -4Q-3 -5.500 -0.500 -3.500V5Q-3 3 -6.500 4.500ZM6.500 -4Q3 -5.500 0.500 -3.500V5Q3 3 6.500 4.500Z" fill="#fff" /></g> },
  { art: <g>{disc("#1a86f2")}<path d="M0 -6L-5 5M-1 -6L5 5M-7 2H7" stroke="#fff" strokeWidth="1.800" />{badge}</g> },
  { art: <g><circle cx="1" r="9" fill="#e25a35" /><path d="M1 -9A9 9 0 0 1 10 0H1Z" fill="#f5886a" /><rect x="-10" y="-5" width="10" height="10" rx="1" fill="#bf3517" /><text x="-7.500" y="3" fontSize="8" fontWeight="700" fill="#fff">P</text></g> },
  { art: <g><rect x="-10" y="-9.500" width="20" height="19" rx="1" fill="#a8afb4" /><circle r="7" fill="#777" stroke="#2e2e2e" strokeWidth="2" /><circle r="3.500" fill="none" stroke="#ddd" /><path d="M0 0L6 0M0 0L-3 5M0 0L-3 -5" stroke="#222" strokeWidth="1.500" /></g> },
  { art: <g><rect x="-10" y="-9" width="20" height="18" rx="1" fill="#232629" stroke="#888" strokeWidth="0.700" /><path d="M-8 -6L-6 -4.500L-8 -3M-5 -3H-2" stroke="#ddd" strokeWidth="0.900" fill="none" /></g> },
  { on: true, art: <g><circle cx="-4" cy="-4" r="6.500" fill="#e8f4fb" /><circle cx="4" cy="4" r="6.500" fill="#e8f4fb" /><circle r="9.500" fill="#e8f4fb" /><circle cx="-3.500" cy="-3.500" r="5.500" fill="#1282b8" /><circle cx="3.500" cy="3.500" r="5.500" fill="#1282b8" /><circle r="8" fill="#1282b8" /><text x="-4.600" y="5.500" fontSize="15" fontWeight="700" fill="#fff">S</text>{badge}</g> },
  { on: true, art: <g><rect x="-5" y="-9" width="16" height="18" rx="1" fill="#2b7cd3" /><path d="M-5 0H11V8Q11 9 10 9H-4Q-5 9 -5 8Z" fill="#164b9d" /><path d="M-5 -9H11V-4H-5Z" fill="#41a5ee" /><rect x="-10" y="-5" width="10" height="10" rx="1" fill="#185abd" /><text x="-9" y="3" fontSize="7.500" fontWeight="700" fill="#fff">W</text></g> },
  { on: true, art: <g><rect x="-10" y="-10" width="20" height="20" rx="1" fill="#4a4745" /><path d="M6 -7.500L-6 -4V0L2 2.200L-6 4.500V8L6 4.500V0.500L-2 -1.800L6 -4Z" fill="#fb9b19" /></g> },
  { on: true, art: <g><rect x="-10" y="-10" width="20" height="20" rx="5" fill="#3978ee" /><rect x="-6.500" y="-4" width="9" height="8" rx="2" fill="#fff" /><path d="M3.300 -1L7 -3.500V3.500L3.300 1Z" fill="#fff" /></g> },
  { on: true, art: <g><rect x="-10.500" y="-8" width="21" height="15" fill="#20c878" /><rect x="-5" y="-6.500" width="10" height="15" rx="1" fill="#113d48" /><rect x="-3" y="-4.500" width="6.500" height="11" fill="#e7f6f0" /></g> },
  { on: true, art: <g><circle cx="0" cy="-0.500" r="9.300" fill="#25c583" /><path d="M0 -4L-6 9M0 -4L6 9" stroke="#e5e9eb" strokeWidth="2" /><path d="M-7 3Q0 8 7 3" stroke="#e5e9eb" strokeWidth="1.500" fill="none" /><circle cy="-3" r="3.500" fill="#153846" /><circle cy="-3" r="1.200" fill="#8fd" /></g> },
];

const tiny = {
  finder: <g><rect x="4" y="2" width="7.500" height="7.500" fill="#e8f1fa" /><path d="M4 2H8V6H9V9.500H4Z" fill="#1b93ee" /></g>,
  word: <g><rect x="4" y="3" width="7.500" height="6.500" fill="#2b72cc" /><path d="M3 4H7V9H3Z" fill="#174a9e" /></g>,
  chrome: <g><circle cx="7.500" cy="6" r="4" fill="#e5b91e" /><path d="M7.500 6L4 4A4 4 0 0 1 11 4Z" fill="#e33b2e" /><path d="M7.500 6L4 4A4 4 0 0 0 7.500 10Z" fill="#2ba24c" /><circle cx="7.500" cy="6" r="1.700" fill="#4285f4" stroke="#fff" strokeWidth="0.600" /></g>,
  studio: <g><circle cx="7.500" cy="6" r="3.800" fill="#21bd79" /><circle cx="7.500" cy="5" r="1.500" fill="#153846" /><path d="M7.500 5.500L6 9M7.500 5.500L9 9" stroke="#e9efec" strokeWidth="0.800" /></g>,
  zoom: <rect x="4" y="2" width="8" height="8" rx="3" fill="#3978ee" />,
  music: <g><circle cx="7.500" cy="6" r="4" fill="#fbf3f8" stroke="#e06bc0" /><path d="M6 8V4.500L9 4V7" stroke="#e0468f" fill="none" /></g>,
};
type Kind = keyof typeof tiny;
const recent: { k: Kind; v: string }[] = [
  { k: "finder", v: "few" }, { k: "finder", v: "dark" }, { k: "finder", v: "dark" }, { k: "finder", v: "dark" }, { k: "finder", v: "plain" },
  { k: "finder", v: "dark" }, { k: "finder", v: "blue" }, { k: "finder", v: "blue" }, { k: "music", v: "photo" }, { k: "word", v: "doc" },
  { k: "finder", v: "few" }, { k: "finder", v: "mix" }, { k: "chrome", v: "gray" }, { k: "finder", v: "plain" },
  { k: "finder", v: "mix" }, { k: "word", v: "doc" },
];
const older: { k: Kind; v: string }[] = [
  { k: "zoom", v: "app" }, { k: "word", v: "doc" }, { k: "finder", v: "few" }, { k: "studio", v: "head" }, { k: "chrome", v: "plain" }, { k: "studio", v: "plain" },
];

const dots: Record<string, string[]> = {
  few: ["#55b4ea", "#55b4ea"], dark: ["#333", "#c33", "#222", "#e0a030"], blue: ["#5fb9e6", "#5fb9e6", "#e0b56c", "#5fb9e6"], mix: ["#888", "#e39a4a", "#5fb9e6"],
};

function Thumb({ k, v }: { k: Kind; v: string }) {
  return (
    <g>
      <rect x="-11" y="-6.500" width="22" height="13" fill={v === "gray" ? "#e2e0dd" : "#fbfbfb"} stroke="#ddd" strokeWidth="0.400" />
      {v === "doc" && <g><rect x="-11" y="-6.500" width="22" height="1.500" fill="#8b96aa" /><rect x="-11" y="-5" width="22" height="11.500" fill="#ddd" /><rect x="-7" y="-4" width="14" height="10" fill="#f6f6f6" /></g>}
      {v === "head" && <path d="M-11 -5.500H11M-11 -2.500H11" stroke="#4a64b8" strokeWidth="1.200" />}
      {v === "photo" && <g><path d="M1 -4L9 -6L7 4Z" fill="#555" /><path d="M-9 -2H-2M-9 1H-4" stroke="#aaa" /></g>}
      {v === "app" && <g><path d="M-7 -1H-4" stroke="#f07a32" strokeWidth="2.500" /><path d="M-2 -1H1M-7 3H-4M-2 3H1" stroke="#2e79e6" strokeWidth="2.500" /><rect x="2" y="-4" width="7" height="3" fill="#1f3d49" /></g>}
      {v !== "doc" && v !== "gray" && v !== "photo" && <path d="M-9.500 -3.500V5M-7 -4.500H9M-6 3.500H2" stroke="#dcdcdc" strokeWidth="0.800" strokeDasharray="1 0.800" />}
      {(dots[v] || []).map((c, i) => <rect key={i} x={-5 + i * 4} y={v === "few" ? -4 : -2.500} width="1.600" height="1.600" fill={c} fillOpacity="0.850" />)}
      {(v === "dark" || v === "blue") && dots[v].map((c, i) => <rect key={i} x={-5 + i * 4} y={1} width="1.200" height="1.200" fill={c} fillOpacity="0.700" />)}
      {tiny[k]}
    </g>
  );
}

function DockCell({ children, on }: { children: ReactNode; on?: boolean }) {
  return (
    <svg className="block h-[35px] w-[25.720px] shrink-0 overflow-visible" viewBox="-12.860 -16 25.720 35">
      {children}
      {on && <circle cx="-0.300" cy="15.300" r="1.500" fill="#2a1008" />}
    </svg>
  );
}

function Dock() {
  return (
    <nav className="absolute top-[865px] left-[17px] flex h-[35px] w-[1406px] rounded-t-[4px] bg-[linear-gradient(90deg,#82695f_0%,#a9796a_6%,#cf8168_14%,#dd876a_24%,#c57f6b_31%,#936a57_34%,#ab6f4a_40%,#cd7b3c_48%,#c5742c_54%,#e9801e_62%,#f2981b_74%,#f58e15_85%,#cc7b30_93%,#d9741f_96%,#ef7c1c_100%)] pl-[2.800px]">
      {apps.map((a, i) => <DockCell key={i} on={a.on}>{a.art}</DockCell>)}
      <div className="mr-[5px] ml-[5.500px] mt-[5px] h-[25px] w-px shrink-0 bg-[#8c4c1c]" />
      <DockCell><g><path d="M-8 -11H2L8 -5V10.500H-8Z" fill="#fafafa" /><path d="M2 -11V-5H8Z" fill="#ccc" /><rect x="-5" y="-5" width="10" height="7" fill="#4d70aa" /><path d="M-5 2L0 -1L6 3V5H-3Z" fill="#777" /><text x="-4" y="9" fontSize="3.200" fill="#666">JPEG</text></g></DockCell>
      {recent.map((t, i) => <DockCell key={i}><Thumb {...t} /></DockCell>)}
      <DockCell><g><rect x="-7" y="-11" width="14" height="22" fill="#f7f5ef" /><path d="M-5 -8H3M-5 -5H1M-5 -2H3M-5 1H0" stroke="#bbb" strokeWidth="0.700" /><rect x="4" y="3" width="6.500" height="6.500" fill="#fff5c4" /><path d="M4 3.500H10.500" stroke="#f8ca37" strokeWidth="1.500" /></g></DockCell>
      {older.map((t, i) => <DockCell key={i}><Thumb {...t} /></DockCell>)}
      <DockCell><g><path d="M-8 -8L-6 10.500H6L8 -8Z" fill="#cfcfcf" fillOpacity="0.920" /><path d="M-4 -6L-3 9M0 -6V9M4 -6L3 9M-7 -2H7M-6.500 4H6.500" stroke="#f2f2f2" strokeWidth="0.700" /><path d="M-8 -7L-5 -11L0 -9L5 -11L8 -7L0 -5Z" fill="#eee" /><path d="M-4 -8H-2M2 -9H4" stroke="#396b50" strokeWidth="1.500" /></g></DockCell>
    </nav>
  );
}

export default function App() {
  const tag = "absolute overflow-hidden whitespace-nowrap text-[11px] leading-[14px] font-bold text-white [text-shadow:0_1px_2px_#000]";
  return (
    <main className="relative h-[900px] w-[1440px] overflow-hidden bg-[linear-gradient(90deg,#3a2c26_0%,#4b3325_18%,#804708_30%,#804708_48%,#7b4710_60%,#a05510_78%,#7c5510_88%,#483b10_100%)] [font-family:Inter,sans-serif]">
      <div className="absolute top-0 left-0 h-[858px] w-[12px] bg-[linear-gradient(180deg,#7ca9cc_0px,#7faacf_180px,#a6bcc9_320px,#747b8a_330px,#858895_400px,#626678_490px,#85899a_580px,#a36a2c_592px,#2c332e_610px,#2b302b_640px,#705047_660px,#4c342d_710px,#7f7b18_735px,#887616_755px,#d4a164_770px,#b69645_795px,#3b4d13_810px,#26290d_825px,#5c3830_850px)]" />
      <div className="absolute top-0 right-0 h-[900px] w-[12px] bg-[linear-gradient(180deg,#94a4b4_30px,#b7c3d5_110px,#cfd5e2_182px,#45505a_198px,#777b83_240px,#8d5550_285px,#7a3f36_310px,#684030_330px,#95572f_400px,#6d4028_440px,#9b643c_500px,#6a422b_550px,#85522d_600px,#c5a414_635px,#777d10_680px,#9a9815_715px,#26320c_745px,#5b5011_800px,#79570e_830px,#2e330e_880px)]" />
      <span className={tag + " top-[112px] left-[6px]"}>P</span>
      <span className={tag + " top-[474px] left-0"}>U</span>
      <span className={tag + " top-[595px] left-0"}>Pl</span>
      <span className={tag + " top-[703px] left-[-5px]"}>Pb</span>
      <span className={tag + " top-[114px] left-[1430px]"}>ei</span>
      <span className={tag + " top-[130px] left-[1430px]"}>M</span>
      <span className={tag + " top-[242px] left-[1431px]"}>M</span>
      <span className={tag + " top-[855px] left-[884px] text-[12px]! tracking-[-0.050px] text-[#a5a09a]!"}>...24.06 PM</span>
      <span className={tag + " top-[848px] left-[964px] text-[12px]! text-[#a5a09a]!"}>Screen Shot</span>
      <span className={tag + " top-[849px] left-[1240px] text-[12px]! text-[#a5a09a]!"}>Screen Shot</span>
      <BackWindow />
      <WordWindow />
      <div className="relative"><MenuBar /></div>
      <Phone />
      <EmulatorBar />
      <Dock />
    </main>
  );
}
